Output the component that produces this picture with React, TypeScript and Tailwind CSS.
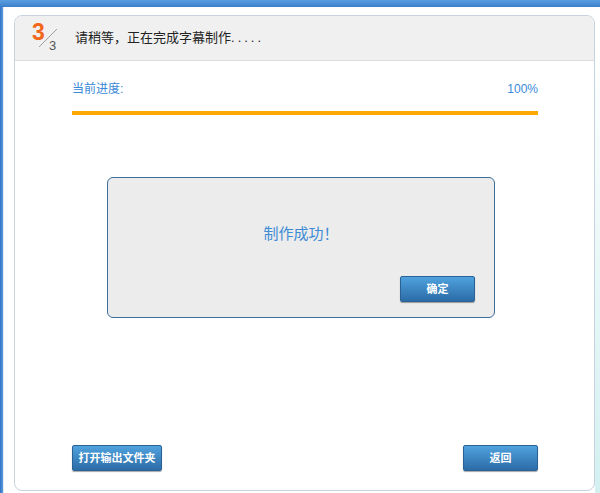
import React from "react";

const font = { fontFamily: '"Liberation Sans", Arial, "Noto Sans CJK SC", sans-serif' };

function BlueButton({ label, w }: { label: string; w: string }) {
  return (
    <button
      className={`${w} h-[26px] rounded-[2px] border border-[#2b6296] bg-gradient-to-b from-[#4fa2de] to-[#2c6ca7] text-[11px] font-bold text-white shadow-[0_1px_1px_rgba(0,0,0,0.35)] flex items-center justify-center`}
    >
      {label}
    </button>
  );
}

export default function App() {
  return (
    <div className="w-[600px] h-[493px] bg-white overflow-hidden flex flex-col" style={font}>
      <div className="h-[7px] w-full bg-gradient-to-b from-[#5a9ee0] to-[#3b7fcb]" />
      <div className="flex flex-1">
        <div className="w-[3px] bg-gradient-to-r from-[#2f72c4] to-[#5a9ae0]" />
        <div className="w-[11px] border-l border-[#e4eaf0] bg-white" />
        <div className="mt-[8px] h-[476px] w-[581px] rounded-[8px] border border-[#c6d3df] bg-white flex flex-col">
          <div className="h-[45px] rounded-t-[7px] bg-[#f0f0f0] border-b border-[#dcdcdc] flex items-center">
            <div className="relative ml-[16px] w-[44px] h-[45px]">
              <span className="absolute left-[1px] top-[3px] text-[23px] font-bold leading-[26px] text-[#f2661b]">3</span>
              <svg className="absolute left-[6px] top-[11px]" width="22" height="22" viewBox="0 0 22 22">
                <line x1="2" y1="20" x2="20" y2="2" stroke="#a0a0a0" strokeWidth="1" />
              </svg>
              <span className="absolute left-[18px] top-[22px] text-[13px] leading-[15px] text-[#555]">3</span>
            </div>
            <span className="text-[13px] text-[#222] leading-[16px]">
              请稍等，正在完成字幕制作<span className="tracking-[3px]">.....</span>
            </span>
          </div>
          <div className="flex-1 flex flex-col pl-[57px] pr-[56px] pb-[19px]">
            <div className="mt-[21px] flex justify-between text-[12px] leading-[14px] text-[#3a8ad8]">
              <span>当前进度:</span>
              <span>100%</span>
            </div>
            <div className="mt-[15px] h-[4px] bg-[#ffa800]" />
            <div className="mt-[62px] ml-[35px] w-[388px] h-[141px] rounded-[6px] border border-[#3b6e9c] bg-[#ececec] flex flex-col items-center">
              <div className="mt-[46px] text-[15px] leading-[20px] text-[#3d8bd5]">制作成功！</div>
              <div className="mt-[32px] self-end mr-[19px]">
                <BlueButton label="确定" w="w-[75px]" />
              </div>
            </div>
            <div className="mt-auto flex justify-between">
              <BlueButton label="打开输出文件夹" w="w-[90px]" />
              <BlueButton label="返回" w="w-[75px]" />
            </div>
          </div>
        </div>
        <div className="flex-1 mt-[40px] bg-gradient-to-b from-white to-[#d3f0f0]" />
      </div>
    </div>
  );
}
